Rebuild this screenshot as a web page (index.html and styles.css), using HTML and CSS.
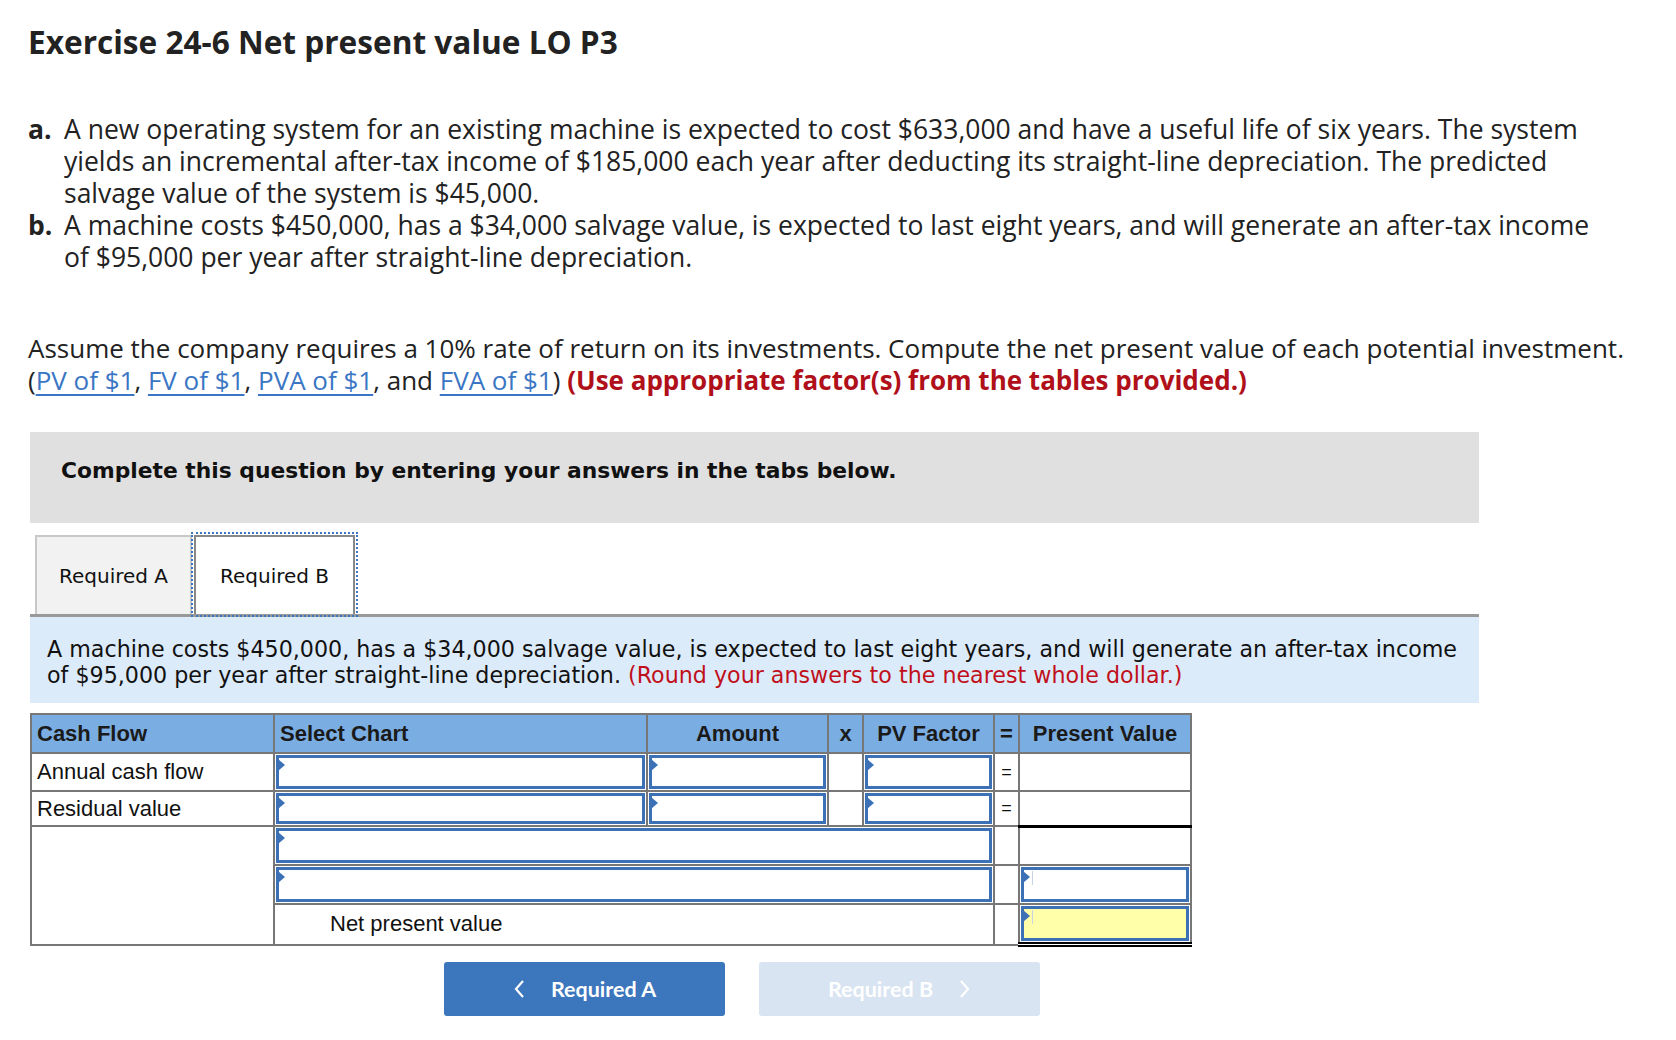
FILE: index.html
```html
<!DOCTYPE html>
<html>
<head>
<meta charset="utf-8">
<link rel="stylesheet" href="styles.css">
</head>
<body>
<div class="page">
  <h1 class="title">Exercise 24-6 Net present value LO P3</h1>
  <ol class="parts">
    <li><span class="lbl">a.</span><span class="txt">A new operating system for an existing machine is expected to cost $633,000 and have a useful life of six years. The system yields an incremental after-tax income of $185,000 each year after deducting its straight-line depreciation. The predicted salvage value of the system is $45,000.</span></li>
    <li><span class="lbl">b.</span><span class="txt">A machine costs $450,000, has a $34,000 salvage value, is expected to last eight years, and will generate an after-tax income of $95,000 per year after straight-line depreciation.</span></li>
  </ol>
  <p class="assume">Assume the company requires a 10% rate of return on its investments. Compute the net present value of each potential investment.<br>(<a href="#">PV of $1</a>, <a href="#">FV of $1</a>, <a href="#">PVA of $1</a>, and <a href="#">FVA of $1</a>) <strong class="red">(Use appropriate factor(s) from the tables provided.)</strong></p>

  <div class="widget">
    <div class="banner">Complete this question by entering your answers in the tabs below.</div>
    <div class="tabs">
      <div class="tab">Required A</div>
      <div class="tab active">Required B</div>
    </div>
    <div class="info">A machine costs $450,000, has a $34,000 salvage value, is expected to last eight years, and will generate an after-tax income of $95,000 per year after straight-line depreciation. <span class="round">(Round your answers to the nearest whole dollar.)</span></div>

    <table class="grid">
      <colgroup>
        <col class="c1"><col class="c2"><col class="c3"><col class="c4"><col class="c5"><col class="c6"><col class="c7">
      </colgroup>
      <thead>
        <tr class="h">
          <th class="l">Cash Flow</th>
          <th class="l">Select Chart</th>
          <th>Amount</th>
          <th>x</th>
          <th>PV Factor</th>
          <th>=</th>
          <th>Present Value</th>
        </tr>
      </thead>
      <tbody>
        <tr class="r1">
          <td class="lab">Annual cash flow</td>
          <td class="in"><div class="box"><i class="tri"></i></div></td>
          <td class="in"><div class="box"><i class="tri"></i></div></td>
          <td></td>
          <td class="in"><div class="box"><i class="tri"></i></div></td>
          <td class="eq">=</td>
          <td></td>
        </tr>
        <tr class="r2">
          <td class="lab">Residual value</td>
          <td class="in"><div class="box"><i class="tri"></i></div></td>
          <td class="in"><div class="box"><i class="tri"></i></div></td>
          <td></td>
          <td class="in"><div class="box"><i class="tri"></i></div></td>
          <td class="eq">=</td>
          <td class="sum"></td>
        </tr>
        <tr class="r3">
          <td rowspan="3" class="empty"></td>
          <td colspan="4" class="in"><div class="box"><i class="tri"></i></div></td>
          <td></td>
          <td></td>
        </tr>
        <tr class="r4">
          <td colspan="4" class="in"><div class="box"><i class="tri"></i></div></td>
          <td></td>
          <td class="in pv"><div class="box"><i class="tri"></i><i class="caret"></i></div></td>
        </tr>
        <tr class="r5">
          <td colspan="4" class="npv">Net present value</td>
          <td></td>
          <td class="in pv total"><div class="box yellow"><i class="tri"></i><i class="caret"></i></div></td>
        </tr>
      </tbody>
    </table>

    <div class="nav">
      <button class="btn prev"><svg width="12" height="20" viewBox="0 0 12 20"><path d="M10 2 L3 10 L10 18" fill="none" stroke="#fff" stroke-width="2.2"/></svg><span>Required A</span></button>
      <button class="btn next"><span>Required B</span><svg width="12" height="20" viewBox="0 0 12 20"><path d="M2 2 L9 10 L2 18" fill="none" stroke="#fff" stroke-width="2.2"/></svg></button>
    </div>
  </div>
</div>
</body>
</html>
```

FILE: styles.css
```css
* { box-sizing: border-box; }
html, body { margin: 0; padding: 0; background: #fff; }
body { font-family: "Open Sans", "Lato", sans-serif; color: #222; }
.page { padding: 20px 28px 0 28px; }

.title {
  margin: 0;
  font-family: "Open Sans", sans-serif;
  font-weight: 700;
  font-size: 31.6px;
  line-height: 44px;
  color: #222;
}

.parts {
  list-style: none;
  margin: 49px 0 0 0;
  padding: 0;
  font-size: 26.5px;
  line-height: 32px;
}
.parts li { display: flex; }
.parts .lbl { width: 36px; flex: none; font-weight: 700; }
.parts .txt { flex: 1; padding-right: 48px; }

.assume {
  margin: 59px 0 0 0;
  font-size: 26px;
  line-height: 32px;
  white-space: nowrap;
}
.assume a { color: #3a76c4; text-decoration: underline; text-underline-offset: 4px; }
.assume .red { color: #b0101a; font-weight: 700; }

.widget { width: 1449px; margin: 36px 0 0 2px; }

.banner {
  background: #e0e0e0;
  height: 91px;
  padding: 27px 0 0 31px;
  font-family: "DejaVu Sans", Verdana, sans-serif;
  font-weight: 700;
  font-size: 21.8px;
  line-height: 24px;
  color: #111;
}

.tabs {
  display: flex;
  margin-top: 13px;
  padding-left: 5px;
  height: 81px;
  border-bottom: 3px solid #999;
  align-items: flex-end;
}
.tab {
  font-family: "DejaVu Sans", Verdana, sans-serif;
  font-size: 20px;
  color: #111;
  height: 79px;
  display: flex;
  align-items: center;
  justify-content: center;
  border: 2px solid #c8c8c8;
  border-bottom: none;
  background: #f2f2f2;
  width: 157px;
}
.tab.active {
  background: #fff;
  width: 161px;
  border: 2px solid #888;
  border-bottom: none;
  outline: 2px dotted #3d77c0;
  outline-offset: 1px;
  margin-left: 2px;
}

.info {
  background: #dcebf9;
  padding: 19px 18px 12px 17px;
  font-family: "DejaVu Sans", Verdana, sans-serif;
  font-size: 22.2px;
  line-height: 26px;
  color: #111;
  height: 86px;
}
.info .round { color: #c0101b; }

.grid {
  margin-top: 10px;
  border-collapse: collapse;
  table-layout: fixed;
  width: 1160px;
  font-family: "Liberation Sans", Arial, sans-serif;
  font-size: 22px;
  color: #111;
  border: 2px solid #777;
}
.c1 { width: 243px; } .c2 { width: 373px; } .c3 { width: 181px; }
.c4 { width: 35px; } .c5 { width: 131px; } .c6 { width: 25px; } .c7 { width: 172px; }

.grid th, .grid td { border: 2px solid #777; padding: 0; }
.grid th {
  background: #7aaee3;
  font-weight: 700;
  height: 39px;
  text-align: center;
  color: #1a1a1a;
  font-size: 22px;
}
.grid th.l { text-align: left; padding-left: 5px; }
.grid tr.r1 td { height: 38px; }
.grid tr.r2 td { height: 35px; }
.grid tr.r3 td { height: 39px; }
.grid tr.r4 td { height: 39px; }
.grid tr.r5 td { height: 40px; }
.grid td.lab { padding-left: 5px; }
.grid td.eq { text-align: center; font-size: 18px; }
.grid td.sum { border-bottom: 3px solid #000; }
.grid td.npv { padding-left: 55px; }
.grid td.in { padding: 1px; }
.grid td.total { border-bottom: 5px double #000; }

.box {
  position: relative;
  border: 3px solid #3c71b6;
  background: #fff;
}
.box.yellow { background: #ffffaa; }
.tri {
  position: absolute;
  left: -1px;
  top: 1px;
  width: 0; height: 0;
  border-top: 6px solid transparent;
  border-bottom: 6px solid transparent;
  border-left: 7px solid #3c71b6;
}
.caret {
  position: absolute;
  left: 8px;
  top: 1px;
  width: 1px;
  height: 14px;
  background: #c8d4e4;
}
.r1 .box { height: 34px; }
.r2 .box { height: 31px; }
.r3 .box, .r4 .box { height: 35px; }
.r5 .box { height: 35px; }

.nav {
  display: flex;
  gap: 34px;
  margin: 15px 0 0 414px;
}
.btn {
  width: 281px;
  height: 54px;
  border: none;
  border-radius: 3px;
  font-family: "Lato", sans-serif;
  font-weight: 700;
  font-size: 21.5px;
  color: #fff;
  display: flex;
  align-items: center;
  justify-content: center;
  gap: 26px;
}
.btn.prev { background: #3c76bc; }
.btn.next { background: #d8e4f1; color: #fff; }
```
